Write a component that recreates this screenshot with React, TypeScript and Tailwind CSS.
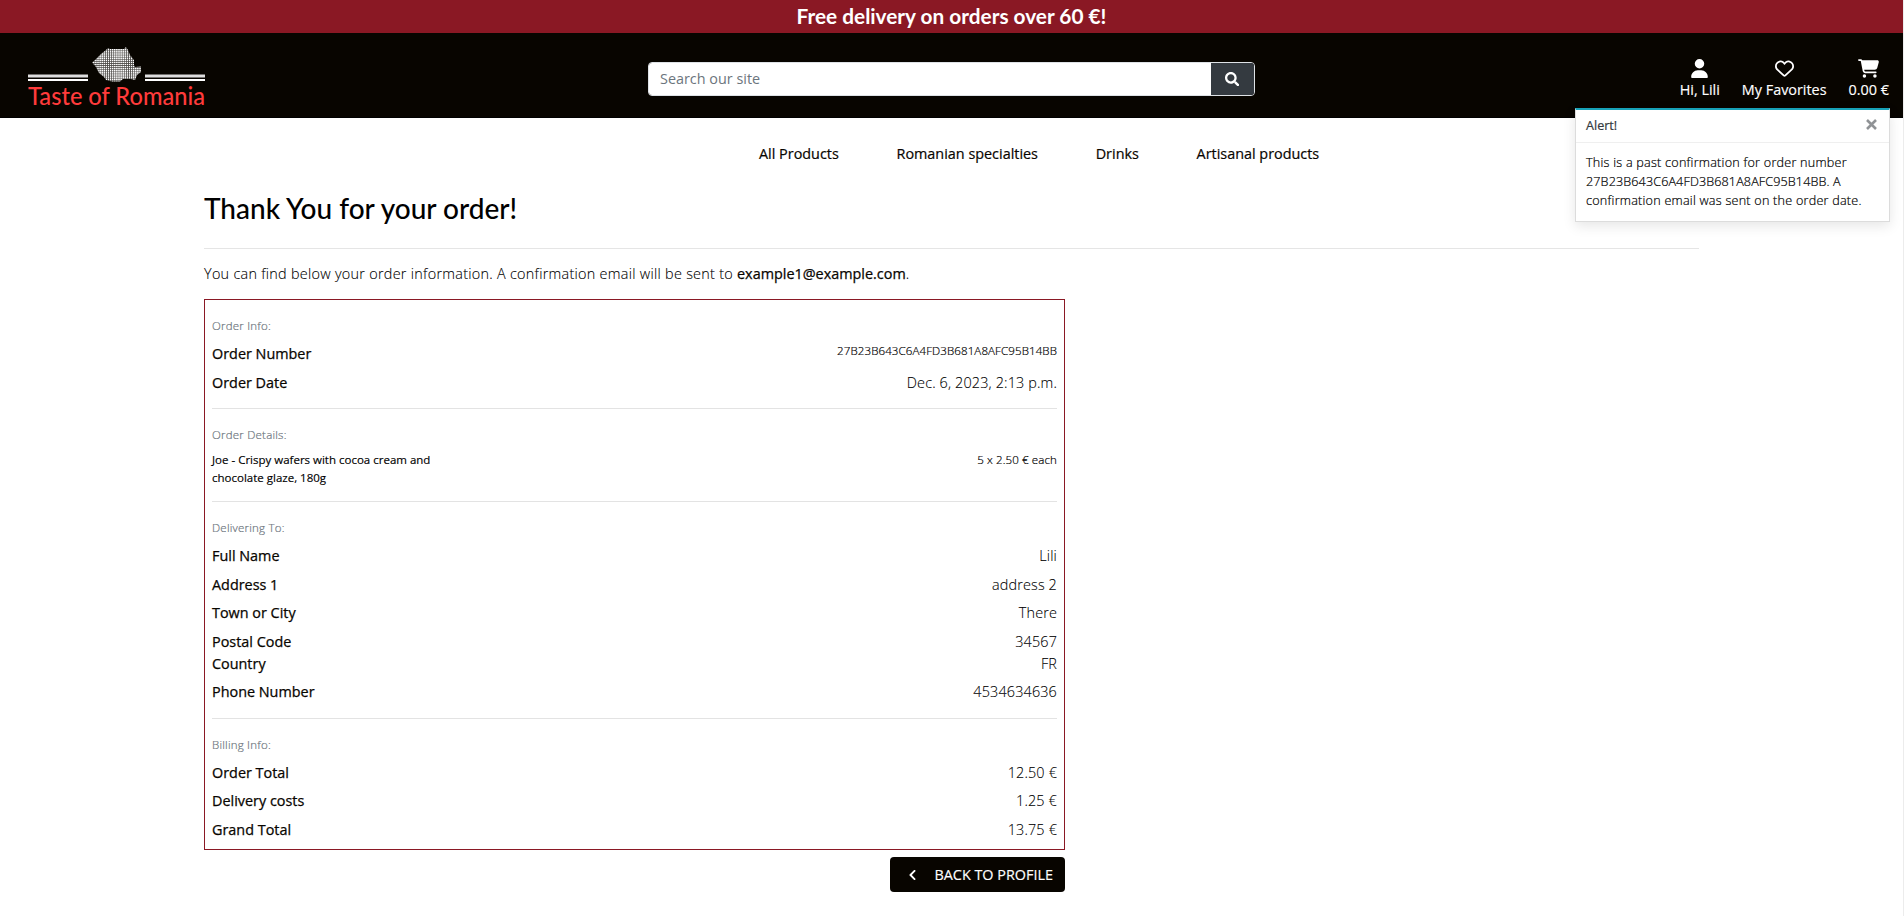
import React from "react";
import { FaUser, FaRegHeart, FaCartShopping } from "react-icons/fa6";
import { FaSearch, FaChevronLeft } from "react-icons/fa";

type RowProps = { label: string; value: string; h?: string; small?: boolean };

function Row({ label, value, h = "h-[28.7px]", small = false }: RowProps) {
  return (
    <div className={`flex justify-between ${h}`}>
      <span className="text-[14.4px] leading-[22px] font-medium text-[#080500] [-webkit-text-stroke:0.25px]">{label}</span>
      <span
        className={
          small
            ? "text-[11.5px] leading-[16px] font-light tracking-[0.12px] text-black [-webkit-text-stroke:0.2px]"
            : "text-[14.4px] leading-[22px] font-light tracking-[0.15px] text-black [-webkit-text-stroke:0.1px]"
        }
      >
        {value}
      </span>
    </div>
  );
}

function SectionTitle({ children }: { children: string }) {
  return (
    <div className="h-[26px] text-[11.5px] leading-[18px] font-light tracking-[0.22px] text-[#6c757d] [-webkit-text-stroke:0.2px]">
      {children}
    </div>
  );
}

function Logo() {
  return (
    <svg width="180" height="66" viewBox="0 0 180 66" className="block">
      <defs>
        <pattern id="dots" width="2.1" height="2.1" patternUnits="userSpaceOnUse">
          <rect width="2.1" height="2.1" fill="#4a4845" />
          <rect width="1.45" height="1.45" fill="#ffffff" />
        </pattern>
      </defs>
      <path
        fill="url(#dots)"
        d="M64 15.500L67 13L73 7L78 3L80 1L82 2H96L98 0L100 3L102 8L106 13V18L107 20L113 19.500V25L109 28L107 33L103 32H95L92 34.500H84L78 33L76 30L71 26L68 20Z"
      />
      <rect x="0" y="27.500" width="60" height="3" fill="#dedede" />
      <rect x="0" y="32" width="60" height="2" fill="#fff" />
      <rect x="117" y="27.500" width="60" height="3" fill="#dedede" />
      <rect x="117" y="32" width="60" height="2" fill="#fff" />
      <text
        x="0"
        y="58"
        textLength="177"
        lengthAdjust="spacingAndGlyphs"
        className="fill-[#ff3b3b] font-['Lato',sans-serif] text-[24px] font-medium"
      >
        Taste of Romania
      </text>
    </svg>
  );
}

export default function App() {
  return (
    <div className="relative h-[916px] w-full overflow-hidden border-r border-[#ececec] bg-white font-['Open_Sans',sans-serif] text-black">
      <div className="flex h-[33px] items-center justify-center bg-[#8a1824] pb-px font-['Lato',sans-serif] text-[20.8px] font-bold text-white">
        Free delivery on orders over 60 €!
      </div>
      <header className="grid h-[85px] grid-cols-[648px_607px_1fr] items-start border-b border-black bg-[#080500]">
        <div className="pt-[14px] pl-7">
          <Logo />
        </div>
        <div className="mt-[29px] flex h-[34px] overflow-hidden rounded-[4px] border border-[#dee2e6]">
          <div className="flex flex-1 items-center bg-white pl-[11px] text-[14.4px] text-[#6c757d]">Search our site</div>
          <button className="flex w-[43px] items-center justify-center bg-[#343a40] pr-px text-[14.4px] text-white">
            <FaSearch />
          </button>
        </div>
        <div className="flex justify-end gap-[22px] pt-[26px] pr-[14px] text-[14.4px] font-medium text-white [-webkit-text-stroke:0.15px]">
          <div className="flex flex-col items-center">
            <FaUser className="h-[19px] w-[17px]" />
            <span className="leading-6">Hi, Lili</span>
          </div>
          <div className="flex flex-col items-center">
            <FaRegHeart className="h-[19px] w-[19px]" />
            <span className="leading-6">My Favorites</span>
          </div>
          <div className="flex flex-col items-center">
            <FaCartShopping className="h-[19px] w-[21px]" />
            <span className="leading-6">0.00 €</span>
          </div>
        </div>
      </header>
      <nav className="flex h-[72px] items-center gap-[57.7px] pl-[759px] text-[14.4px] font-medium text-[#080500] [-webkit-text-stroke:0.2px]">
        <a>All Products</a>
        <a>Romanian specialties</a>
        <a>Drinks</a>
        <a>Artisanal products</a>
      </nav>
      <main className="ml-[204px] w-[1495px]">
        <div className="h-[59px] border-b border-[#e5e5e5] font-['Lato',sans-serif] text-[28px] leading-[36px] font-medium">
          Thank You for your order!
        </div>
        <p className="flex h-[50px] items-center whitespace-pre text-[14.4px] font-light tracking-[0.28px] [-webkit-text-stroke:0.1px]">
          You can find below your order information. A confirmation email will be sent to <span className="font-medium tracking-normal text-[#080500] [-webkit-text-stroke:0.25px]">example1@example.com</span>.
        </p>
        <div className="w-[861px]">
          <section className="h-[551px] border border-[#8a1824] px-[7px]">
            <div className="h-[109px] border-b border-[#e3e3e3] pt-[17px]">
              <SectionTitle>Order Info:</SectionTitle>
              <Row label="Order Number" value="27B23B643C6A4FD3B681A8AFC95B14BB" small />
              <Row label="Order Date" value="Dec. 6, 2023, 2:13 p.m." />
            </div>
            <div className="h-[93px] border-b border-[#e3e3e3] pt-[17px]">
              <SectionTitle>Order Details:</SectionTitle>
              <div className="-mt-px flex justify-between text-[11.5px] leading-[18px]">
                <span className="w-[240px] font-medium [-webkit-text-stroke:0.15px]">
                  Joe - Crispy wafers with cocoa cream and chocolate glaze, 180g
                </span>
                <span className="font-light tracking-[0.12px] [-webkit-text-stroke:0.2px]">5 x 2.50 € each</span>
              </div>
            </div>
            <div className="h-[217px] border-b border-[#e3e3e3] pt-[17px]">
              <SectionTitle>Delivering To:</SectionTitle>
              <Row label="Full Name" value="Lili" />
              <Row label="Address 1" value="address 2" />
              <Row label="Town or City" value="There" />
              <Row label="Postal Code" value="34567" h="h-[22px]" />
              <Row label="Country" value="FR" h="h-[28px]" />
              <Row label="Phone Number" value="4534634636" />
            </div>
            <div className="pt-[17px]">
              <SectionTitle>Billing Info:</SectionTitle>
              <Row label="Order Total" value="12.50 €" h="h-[28.3px]" />
              <Row label="Delivery costs" value="1.25 €" />
              <Row label="Grand Total" value="13.75 €" />
            </div>
          </section>
          <div className="flex justify-end pt-[7px]">
            <button className="flex h-[35px] w-[175px] items-center justify-between rounded-[4px] bg-[#080500] pr-3 pl-[18px] text-[14.4px] font-medium text-white [-webkit-text-stroke:0.15px]">
              <FaChevronLeft className="h-3 w-[9px]" />
              <span>BACK TO PROFILE</span>
            </button>
          </div>
        </div>
      </main>
      <aside className="absolute top-[108px] left-[1575px] h-[114px] w-[315px] border border-t-2 border-[#dcdcdc] border-t-[#17a2b8] bg-white shadow-[0_4px_12px_rgba(0,0,0,0.1)]">
        <div className="flex h-[33px] items-center justify-between border-b border-[#efefef] pr-3 pl-[10px] text-[12.6px] font-medium text-[#343a40] [-webkit-text-stroke:0.2px]">
          <span>Alert!</span>
          <svg width="11" height="11" viewBox="0 0 11 11" stroke="#909396" strokeWidth="2.600" className="-mt-1">
            <path d="M1 1l9 9M10 1l-9 9" />
          </svg>
        </div>
        <div className="pt-[10px] pl-[10px] text-[12.6px] leading-[19px] font-light whitespace-nowrap [-webkit-text-stroke:0.2px]">
          <div className="tracking-[0.24px]">This is a past confirmation for order number</div>
          <div className="tracking-[0.12px]">27B23B643C6A4FD3B681A8AFC95B14BB. A</div>
          <div className="tracking-[0.24px]">confirmation email was sent on the order date.</div>
        </div>
      </aside>
    </div>
  );
}
